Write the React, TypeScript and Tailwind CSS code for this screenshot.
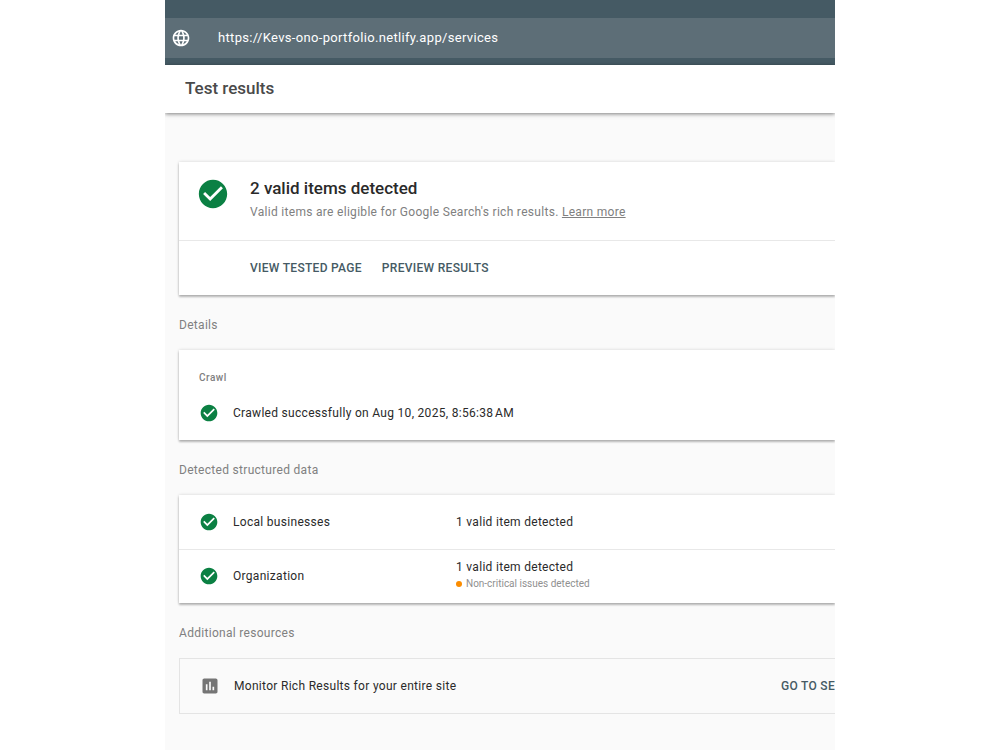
import React from 'react';
import { MdCheckCircle, MdInsertChart, MdLanguage } from 'react-icons/md';

const card = 'bg-white shadow-[0_2px_2px_rgba(0,0,0,0.25),0_0_3px_rgba(0,0,0,0.16)]';
const action = 'text-xs leading-5 font-medium tracking-wide uppercase text-[#455a64] whitespace-nowrap cursor-pointer';

const items = [
  { name: 'Local businesses', status: '1 valid item detected', warning: '' },
  { name: 'Organization', status: '1 valid item detected', warning: 'Non-critical issues detected' },
];

const SectionTitle = ({ children }: { children: React.ReactNode }) => (
  <h2 className="pt-[21px] pb-4 text-xs leading-[18px] tracking-wide text-[#808080]">{children}</h2>
);

const App = () => {
  return (
    <div className="min-h-screen bg-white font-['Roboto',sans-serif] text-[#2a2a2a]">
      <div className="mx-auto w-[67%] min-h-screen overflow-hidden bg-[#fafafa]">
        <header className="bg-[#455a64] pt-[18px] pb-[7px]">
          <label className="flex h-10 items-center gap-[27px] bg-[#5d6e77] pl-1.5 text-white">
            <MdLanguage className="size-5 shrink-0" aria-hidden="true" />
            <input
              type="url"
              aria-label="Tested URL"
              defaultValue="https://Kevs-ono-portfolio.netlify.app/services"
              className="w-full bg-transparent text-[13px] leading-5 tracking-wide text-white outline-none"
            />
          </label>
        </header>

        <div className="relative bg-white px-5 pt-[11px] pb-[13px] shadow-[0_1px_4px_rgba(0,0,0,0.5)]">
          <h1 className="text-[17px] leading-6 font-medium text-[#4a4a4a]">Test results</h1>
        </div>

        <main className="pt-[49px] pb-9 pl-3.5">
          <section className={card}>
            <div className="flex gap-5 px-[17px] pt-[15px] pb-[17px]">
              <MdCheckCircle className="size-[34px] shrink-0 text-[#0b8043]" aria-hidden="true" />
              <div>
                <h2 className="text-[17px] leading-[22px] font-medium">2 valid items detected</h2>
                <p className="mt-[3px] text-xs leading-5 tracking-wide text-[#808080]">
                  Valid items are eligible for Google Search's rich results.{' '}
                  <a href="#learn-more" className="underline">Learn more</a>
                </p>
              </div>
            </div>
            <div className="mt-px flex gap-5 border-t border-[#e8e8e8] py-[17px] pl-[71px]">
              <button type="button" className={action}>View tested page</button>
              <button type="button" className={action}>Preview results</button>
            </div>
          </section>

          <SectionTitle>Details</SectionTitle>
          <section className={`${card} px-5 pt-5 pb-[17px]`}>
            <h3 className="text-[10px] leading-4 font-medium tracking-wider text-[#808080]">Crawl</h3>
            <div className="mt-[17px] flex items-center gap-3.5">
              <MdCheckCircle className="size-5 text-[#0b8043]" aria-hidden="true" />
              <p className="text-xs leading-5 tracking-wide">Crawled successfully on Aug 10, 2025, 8:56:38&#8239;AM</p>
            </div>
          </section>

          <SectionTitle>Detected structured data</SectionTitle>
          <table className={`${card} w-full table-fixed border-collapse text-left text-xs leading-[18px] tracking-wide`}>
            <tbody>
              {items.map((item) => (
                <tr key={item.name} className="h-[54px] border-t border-[#e8e8e8] first:border-t-0">
                  <th scope="row" className="w-[277px] pl-5 font-normal">
                    <span className="flex items-center gap-3.5">
                      <MdCheckCircle className="size-5 text-[#0b8043]" aria-hidden="true" />
                      {item.name}
                    </span>
                  </th>
                  <td>
                    {item.status}
                    {item.warning && (
                      <div className="flex items-center gap-1 pb-0.5 text-[10px] leading-4 tracking-normal text-[#909090]">
                        <span className="size-1.5 rounded-full bg-[#fb8c00]" />
                        {item.warning}
                      </div>
                    )}
                  </td>
                </tr>
              ))}
            </tbody>
          </table>

          <SectionTitle>Additional resources</SectionTitle>
          <section className="flex items-center border border-r-0 border-[#e4e4e4] py-[17px] pl-5">
            <MdInsertChart className="size-5 shrink-0 text-[#757575]" aria-hidden="true" />
            <p className="ml-3.5 flex-1 text-xs leading-5 tracking-wide">Monitor Rich Results for your entire site</p>
            <button type="button" className={action}>Go to se</button>
          </section>
        </main>
      </div>
    </div>
  );
};

export default App;
